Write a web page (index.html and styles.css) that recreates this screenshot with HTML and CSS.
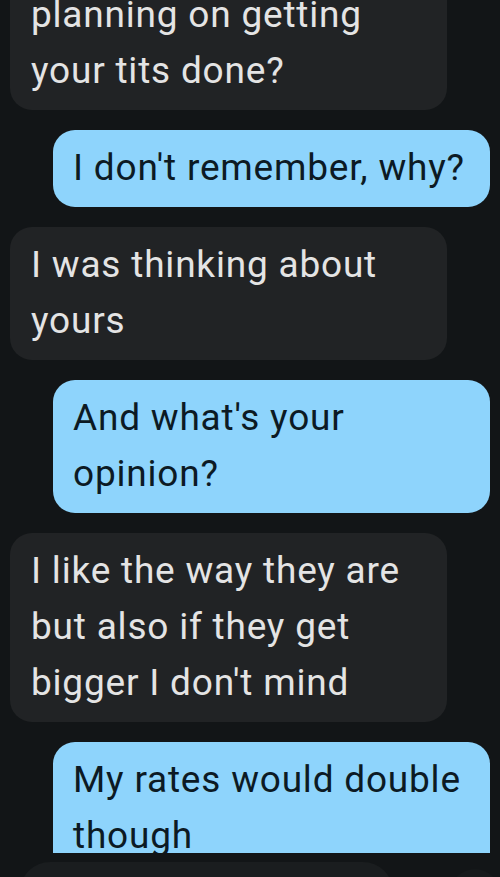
FILE: index.html
```html
<!DOCTYPE html>
<html lang="en">
<head>
<meta charset="utf-8">
<title>Chat</title>
<link rel="stylesheet" href="styles.css">
</head>
<body>
<main class="chat">
  <div class="msg in first"><p>planning on getting<br>your tits done?</p></div>
  <div class="msg out"><p>I don't remember, why?</p></div>
  <div class="msg in"><p>I was thinking about<br>yours</p></div>
  <div class="msg out"><p>And what's your<br>opinion?</p></div>
  <div class="msg in"><p>I like the way they are<br>but also if they get<br>bigger I don't mind</p></div>
  <div class="clip">
    <div class="msg out"><p>My rates would double<br>though</p></div>
  </div>
  <div class="next-row">
    <div class="ghost left"></div>
    <div class="ghost right"></div>
  </div>
</main>
</body>
</html>
```
FILE: styles.css
```css
html, body {
  margin: 0;
  padding: 0;
  background: #121517;
  height: 100%;
  overflow: hidden;
}

.chat {
  display: flex;
  flex-direction: column;
  gap: 20px;
  font-family: Roboto, "Noto Sans", sans-serif;
  font-size: 37px;
  letter-spacing: 0.8px;
  line-height: 56px;
}

.msg {
  width: 437px;
  box-sizing: border-box;
  border-radius: 22px;
  padding: 10px 12px 11px 21px;
}

.msg p {
  margin: 0;
  white-space: nowrap;
}

.msg.in {
  margin-left: 10px;
  background: #212325;
  color: #e4e4e4;
}

.msg.out {
  margin-left: 53px;
  background: #8ed4fc;
  color: #0c1a24;
  padding-left: 20px;
}

.msg.first {
  margin-top: -23px;
}

.clip {
  height: 111px;
  overflow: hidden;
}

.next-row {
  display: flex;
  justify-content: space-between;
  margin-top: -11px;
}

.ghost {
  height: 40px;
  background: #1a1d1f;
  border-radius: 30px 30px 0 0;
}

.ghost.left {
  width: 373px;
  margin-left: 20px;
}

.ghost.right {
  width: 50px;
  margin-top: 7px;
  background: #16191b;
}
```
